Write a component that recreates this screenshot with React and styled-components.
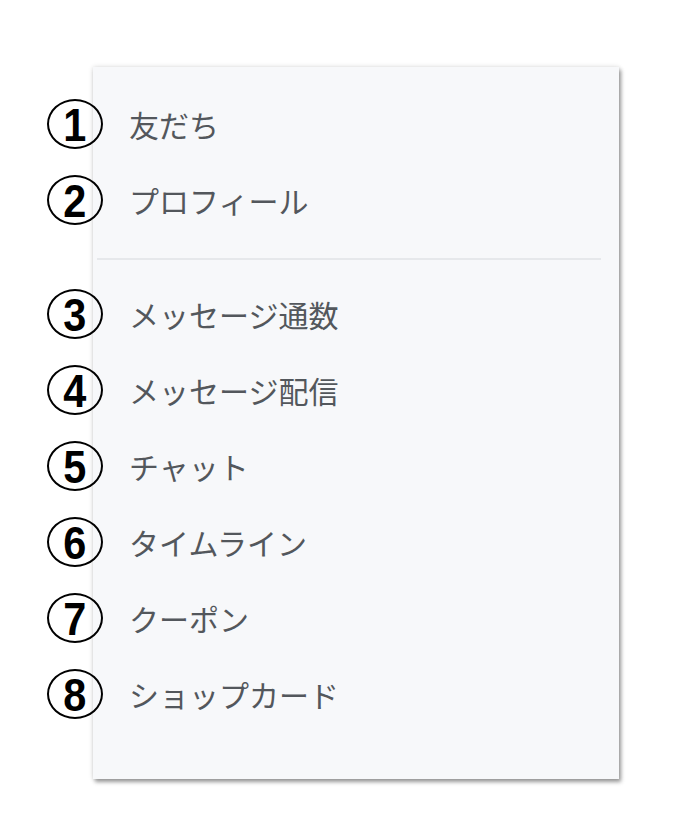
import React from "react";
import styled, { createGlobalStyle } from "styled-components";

const Global = createGlobalStyle`
  html, body { margin: 0; padding: 0; background: #ffffff; }
  body { font-family: "Noto Sans CJK JP", "Noto Sans", sans-serif; }
`;

const Page = styled.div`
  width: 684px;
  height: 836px;
  padding: 67px 0 0 93px;
  box-sizing: border-box;
`;

const Panel = styled.nav`
  width: 526px;
  height: 712px;
  box-sizing: border-box;
  background: #f7f8fa;
  padding: 19px 18px 0 4px;
  box-shadow: 2px 3px 4px rgba(0, 0, 0, 0.38), 0 0 5px rgba(0, 0, 0, 0.14);
  display: flex;
  flex-direction: column;
`;

const Item = styled.div`
  position: relative;
  height: 76px;
  display: flex;
  align-items: center;
  padding-left: 32px;
  font-family: "Noto Sans CJK JP", sans-serif;
  font-size: 30px;
  color: #53575c;
`;

const Separator = styled.hr`
  margin: 20px 0 16px 0;
  border: none;
  height: 2px;
  background: #e6e8eb;
`;

const Badge = styled.span`
  position: absolute;
  left: -50px;
  top: 50%;
  transform: translateY(-50%);
  width: 56px;
  height: 50px;
  box-sizing: border-box;
  border: 2.5px solid #000;
  border-radius: 50%;
  display: flex;
  align-items: center;
  justify-content: center;
  font-family: "Liberation Sans", Arial, sans-serif;
  font-weight: 700;
  font-size: 46px;
  line-height: 1;
  color: #000;
`;

const Digit = styled.span`
  display: block;
  transform: translateY(1px) scaleX(0.9);
`;

const groups = [
  ["友だち", "プロフィール"],
  ["メッセージ通数", "メッセージ配信", "チャット", "タイムライン", "クーポン", "ショップカード"],
];

export default function App() {
  let n = 0;
  return (
    <>
      <Global />
      <Page>
        <Panel>
          {groups.map((g, gi) => (
            <React.Fragment key={gi}>
              {gi > 0 && <Separator />}
              {g.map((label) => {
                n += 1;
                return (
                  <Item key={label}>
                    <Badge>
                      <Digit>{n}</Digit>
                    </Badge>
                    {label}
                  </Item>
                );
              })}
            </React.Fragment>
          ))}
        </Panel>
      </Page>
    </>
  );
}
